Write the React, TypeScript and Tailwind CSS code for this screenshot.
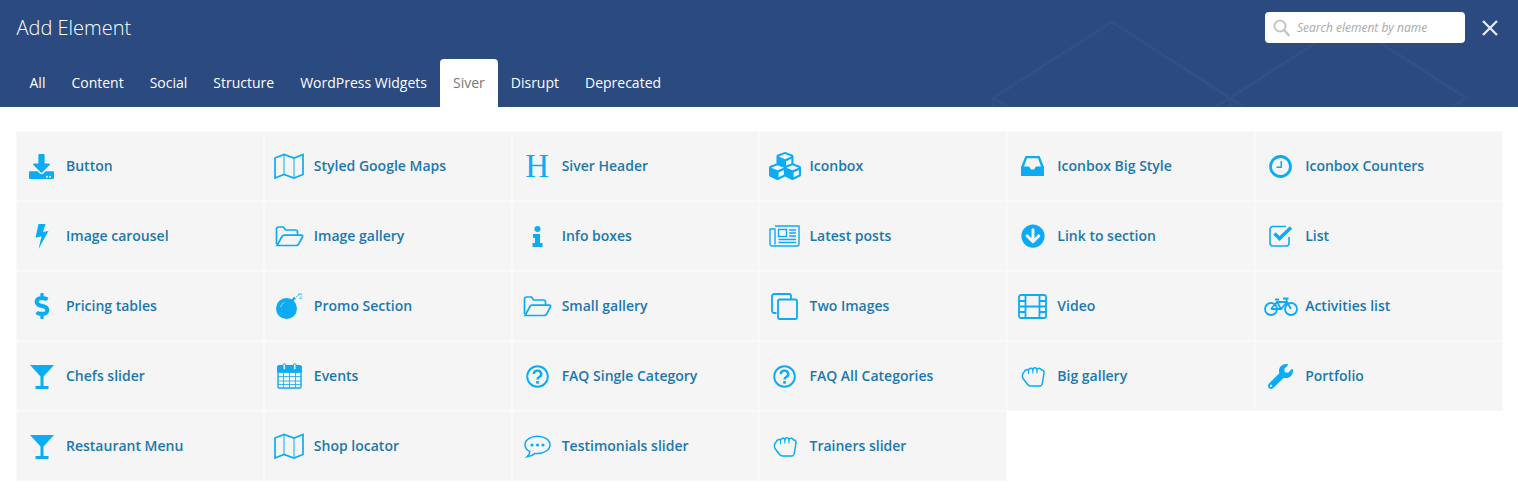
import React from "react";
import { FaDownload, FaCubes, FaArrowCircleDown, FaDollarSign, FaWrench } from "react-icons/fa";

const ClockIcon = () => (
  <svg width="23" height="23" viewBox="0 0 23 23" fill="none" stroke="currentColor">
    <circle cx="11.5" cy="11.5" r="10" strokeWidth="2.8" />
    <path d="M12.2 6v6.3H7.5" strokeWidth="1.5" />
  </svg>
);
const CopyIcon = () => (
  <svg width="27" height="27" viewBox="0 0 27 27" fill="none" stroke="currentColor" strokeWidth="1.8">
    <path d="M5.5 20H3a2 2 0 0 1-2-2V3a2 2 0 0 1 2-2h15a2 2 0 0 1 2 2v3" />
    <rect x="7" y="6.5" width="19" height="19.5" rx="1.5" />
  </svg>
);
const MapIcon = () => (
  <svg width="30" height="27" viewBox="0 0 30 27" fill="none" stroke="currentColor" strokeWidth="1.7">
    <path d="M1 5l9-3.5 10 3.5 9-3.5v20l-9 3.5-10-3.5-9 3.5z" />
    <path d="M10 1.5v20M20 5v20" strokeWidth="1" />
  </svg>
);
const FolderIcon = () => (
  <svg width="29" height="21" viewBox="0 0 29 21" fill="none" stroke="currentColor" strokeWidth="1.7">
    <path d="M1.5 18V3a2 2 0 0 1 2-2h5l2 3h10a2 2 0 0 1 2 2v3" />
    <path d="M2 19.5L7 10.5a2.5 2.5 0 0 1 2-1.300h17.500c1 0 1.500.8 1 1.600l-4 7.500a2.500 2.500 0 0 1-2 1.200z" />
  </svg>
);
const BoltIcon = () => (
  <svg width="14" height="25" viewBox="0 0 14 25" fill="currentColor">
    <path d="M3.500 0H10.500L8 8l5.500-1L3.500 25 6.500 12.500 0.500 13.500z" />
  </svg>
);
const InboxIcon = () => (
  <svg width="23" height="20" viewBox="0 0 23 20" fill="currentColor" fillRule="evenodd">
    <path d="M4.500 0H18.500L23 11V20H0V11zM6 2.300L3 10.500H8L10 13.500H13L15 10.500H20L17 2.300z" />
  </svg>
);
const CheckIcon = () => (
  <svg width="24" height="22" viewBox="0 0 24 22" fill="none" stroke="currentColor">
    <path d="M17 1.500H4a3 3 0 0 0-3 3v13.500a3 3 0 0 0 3 3h13a3 3 0 0 0 3-3v-6" strokeWidth="1.600" />
    <path d="M5.500 8.500l5 5L22 2.500" strokeWidth="3.400" />
  </svg>
);
const NewsIcon = () => (
  <svg width="31" height="22" viewBox="0 0 31 22" fill="none" stroke="currentColor" strokeWidth="1.400">
    <path d="M6 1h24v18.500a1.500 1.500 0 0 1-1.500 1.500H3a2 2 0 0 1-2-2V4h5v15.500" />
    <rect x="9.500" y="4.500" width="8" height="7" />
    <path d="M20 5h7M20 8h7M20 11h7M9.500 14.500h17.500M9.500 17.500h17.500" />
  </svg>
);
const InfoIcon = () => (
  <svg width="11" height="21" viewBox="0 0 11 21" fill="currentColor">
    <circle cx="5.500" cy="3" r="3" />
    <path d="M1 8h7v9h2.500v4H.5v-4H3v-5H1z" />
  </svg>
);
const BombIcon = () => (
  <svg width="27" height="26" viewBox="0 0 27 26" fill="none">
    <circle cx="10.500" cy="15.500" r="10.500" fill="currentColor" />
    <path d="M16 8l3-3.500" stroke="currentColor" strokeWidth="2.500" />
    <path d="M4.500 14a6 6 0 0 1 4-4.500" stroke="#8fdcfb" strokeWidth="1" />
    <path d="M20 4l4-3M22 1h4v.5M23 5l3 1M25 2.500v2" stroke="currentColor" strokeWidth="1" opacity="0.7" />
  </svg>
);
const FilmIcon = () => (
  <svg width="29" height="25" viewBox="0 0 29 25" fill="none" stroke="currentColor" strokeWidth="1.800">
    <rect x="1" y="1" width="27" height="23" rx="2" />
    <path d="M7.500 1v23M21.500 1v23M1 7h6.500M1 12.500h27M1 18h6.500M21.500 7H28M21.500 18H28" />
  </svg>
);
const BikeIcon = () => (
  <svg width="34" height="19" viewBox="0 0 34 19" fill="none" stroke="currentColor" strokeWidth="1.800">
    <circle cx="7" cy="12" r="6" />
    <circle cx="27" cy="12" r="6" />
    <path d="M7 12L13 5H23L27 12M13 5L17 12H7M17 12L23 5M22 1.500L23 5M19 1.500H24.500M11 2.500H15" />
  </svg>
);
const GlassIcon = () => (
  <svg width="24" height="25" viewBox="0 0 24 25" fill="currentColor">
    <path d="M0 1H24L13.500 12.500V22H18.500V25H5.500V22H10.500V12.500z" />
  </svg>
);
const CalendarIcon = () => (
  <svg width="25" height="26" viewBox="0 0 25 26" fill="none" stroke="currentColor">
    <path d="M1.500 2.500H23.500A1.500 1.500 0 0 1 24.500 4V9H.5V4A1.500 1.500 0 0 1 1.500 2.500z" fill="currentColor" strokeWidth="1" />
    <rect x="6" y="0.700" width="2.600" height="6" rx="1.300" fill="#f5f5f5" strokeWidth="1" />
    <rect x="16.400" y="0.700" width="2.600" height="6" rx="1.300" fill="#f5f5f5" strokeWidth="1" />
    <rect x="1" y="9" width="23" height="16" rx="1" strokeWidth="1.400" />
    <path d="M6.500 9v16M12.500 9v16M18.500 9v16M1 13.500h23M1 18h23M1 21.500h23" strokeWidth="0.800" />
  </svg>
);
const QuestionIcon = () => (
  <svg width="23" height="23" viewBox="0 0 23 23" fill="none" stroke="currentColor">
    <circle cx="11.500" cy="11.500" r="10.300" strokeWidth="1.900" />
    <path d="M7.800 9a3.700 3.400 0 1 1 5.500 3c-1.300.7-1.800 1.300-1.800 2.500" strokeWidth="2.400" />
    <rect x="10.200" y="16" width="2.700" height="2.700" fill="currentColor" stroke="none" />
  </svg>
);
const HandIcon = () => (
  <svg width="24" height="21" viewBox="0 0 24 21" fill="none" stroke="currentColor" strokeWidth="1.500">
    <path d="M3.500 5.500C3.500 3.500 6.800 3 7.500 4.500 7.800 1.800 11.200 1.400 11.800 3.500 12.500 1 15.800 1.300 16 3.500 17 1.500 20 2 20.500 4 22 3.500 23.200 5 23 7l-1.500 9.500c-.3 2.200-1 3.500-2.500 3.500H9.500c-1.500 0-2.500-1-3.500-2.300L2 12.500C.7 10.500 1.500 7 3.500 5.500z" />
    <path d="M7.500 4.500V8M11.800 3.500V7.500M16 3.500V7.500" strokeWidth="1" />
  </svg>
);
const CommentIcon = () => (
  <svg width="27" height="23" viewBox="0 0 27 23" fill="none" stroke="currentColor" strokeWidth="1.500">
    <path d="M13.500 1.200C6.800 1.200 1 4.800 1 9.700c0 2.900 2 5.400 4.800 7C5.700 18.500 4.700 20.500 3 21.800c3.200-.3 6-1.500 8-3.400.8.100 1.700.2 2.500.2 6.900 0 12.500-4 12.500-8.900S20.400 1.200 13.500 1.200z" />
    <circle cx="8" cy="10" r="1.600" fill="currentColor" stroke="none" />
    <circle cx="13.500" cy="10" r="1.600" fill="currentColor" stroke="none" />
    <circle cx="19" cy="10" r="1.600" fill="currentColor" stroke="none" />
  </svg>
);
const HIcon = () => <span className="font-['Liberation_Serif',serif] text-[33px] font-normal leading-none">H</span>;

type Item = [string, React.ReactNode];
const items: Item[] = [
  ["Button", <FaDownload size={25} />],
  ["Styled Google Maps", <MapIcon />],
  ["Siver Header", <HIcon />],
  ["Iconbox", <FaCubes size={32} />],
  ["Iconbox Big Style", <InboxIcon />],
  ["Iconbox Counters", <ClockIcon />],
  ["Image carousel", <BoltIcon />],
  ["Image gallery", <FolderIcon />],
  ["Info boxes", <InfoIcon />],
  ["Latest posts", <NewsIcon />],
  ["Link to section", <FaArrowCircleDown size={24} />],
  ["List", <CheckIcon />],
  ["Pricing tables", <FaDollarSign size={26} />],
  ["Promo Section", <BombIcon />],
  ["Small gallery", <FolderIcon />],
  ["Two Images", <CopyIcon />],
  ["Video", <FilmIcon />],
  ["Activities list", <BikeIcon />],
  ["Chefs slider", <GlassIcon />],
  ["Events", <CalendarIcon />],
  ["FAQ Single Category", <QuestionIcon />],
  ["FAQ All Categories", <QuestionIcon />],
  ["Big gallery", <HandIcon />],
  ["Portfolio", <FaWrench size={25} />],
  ["Restaurant Menu", <GlassIcon />],
  ["Shop locator", <MapIcon />],
  ["Testimonials slider", <CommentIcon />],
  ["Trainers slider", <HandIcon />],
];
const tabs = ["All", "Content", "Social", "Structure", "WordPress Widgets", "Siver", "Disrupt", "Deprecated"];

export default function App() {
  return (
    <div className="h-[493px] w-[1518px] overflow-hidden bg-white font-['Open_Sans',sans-serif]">
      <header className="relative h-[107px] overflow-hidden bg-[#2b4a80]">
        <svg className="absolute inset-0" width="1518" height="107" fill="none" stroke="#324f85" strokeWidth="3">
          <path d="M993 98L1112 22L1230 98L1348 22L1466 98L1436 117M993 98V110M1230 98V110M993 98L1024 117M1230 98L1200 117M1230 98L1260 117" />
        </svg>
        <div className="relative flex h-[59px] items-start justify-between pl-[16.5px] pr-[20px]">
          <h1 className="mt-[13px] text-[20px] font-light leading-[30px] text-white">Add Element</h1>
          <div className="flex items-center">
            <div className="mt-3 flex h-[31px] w-[200px] items-center rounded bg-white pl-2">
              <svg width="18" height="18" viewBox="0 0 18 18" fill="none" stroke="#c5c5c5" strokeWidth="2" className="shrink-0">
                <circle cx="7" cy="7" r="5.500" />
                <path d="M11 11l5.500 6" strokeWidth="2.500" />
              </svg>
              <span className="ml-[6px] pt-px text-xs italic text-[#a9a9a9]">Search element by name</span>
            </div>
            <svg width="16" height="16" viewBox="0 0 16 16" stroke="#e4e8ef" strokeWidth="2.400" className="ml-[17px] mt-[12px]">
              <path d="M1 1l14 14M15 1L1 15" />
            </svg>
          </div>
        </div>
        <nav className="relative flex h-[48px] pl-[16.5px]">
          {tabs.map((t) => (
            <div
              key={t}
              className={
                t === "Siver"
                  ? "flex items-center rounded-t bg-white px-[13px] text-sm text-[#777]"
                  : "flex items-center px-[13px] text-sm text-white"
              }
            >
              {t}
            </div>
          ))}
        </nav>
      </header>
      <main className="grid grid-cols-6 pl-4 pr-[15px] pt-6">
        {items.map(([label, icon]) => (
          <div key={label} className="flex h-[70px] items-center border border-[#f9f9f9] bg-[#f5f5f5] text-sm font-semibold text-[#1b78ae]">
            <span className="flex w-[49px] shrink-0 items-center justify-center text-[#0bacf5]">{icon}</span>
            <span>{label}</span>
          </div>
        ))}
      </main>
    </div>
  );
}
